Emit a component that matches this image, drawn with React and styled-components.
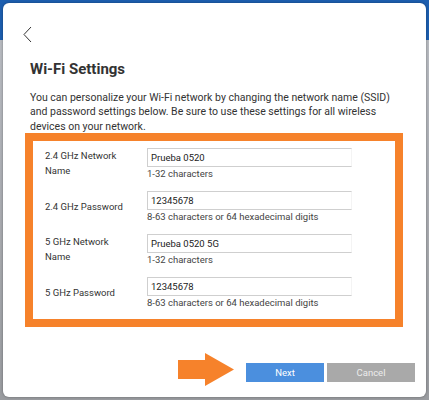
import React from "react";
import styled, { createGlobalStyle } from "styled-components";

const GlobalStyle = createGlobalStyle`
  html, body {
    margin: 0;
    padding: 0;
  }
  body {
    width: 429px;
    height: 400px;
    overflow: hidden;
    font-family: Roboto, "Liberation Sans", sans-serif;
    background: linear-gradient(180deg, #1d5fb0 0px, #1d5fb0 40px, #b9bcc2 40px, #9a9ca0 100%);
  }
`;

const Backdrop = styled.div`
  width: 429px;
  height: 400px;
  box-sizing: border-box;
  padding: 3px 3px 3px 3px;
  display: flex;
`;

const Modal = styled.div`
  flex: 1;
  background: #fff;
  border-radius: 6px;
  box-shadow: 0 0 3px rgba(0, 0, 0, 0.35);
  display: flex;
  flex-direction: column;
`;

const Header = styled.div`
  height: 41px;
  display: flex;
  align-items: flex-end;
  padding-left: 18px;
`;

const BackButton = styled.button`
  border: 0;
  background: none;
  padding: 0;
  width: 14px;
  height: 18px;
  display: flex;
  cursor: pointer;
`;

const Content = styled.div`
  padding: 0 23px 0 22px;
  display: flex;
  flex-direction: column;
  flex: 1;
`;

const Title = styled.h2`
  margin: 16px 0 0 5px;
  font-size: 15px;
  line-height: 18px;
  font-weight: 700;
  color: #333;
`;

const Intro = styled.p`
  margin: 13px 0 0 5px;
  font-size: 10.5px;
  line-height: 14.3px;
  color: #333;
`;

const Highlight = styled.div`
  margin-top: -1px;
  border: 8px solid #f6822b;
  padding: 7px 12px 10px 12px;
  display: flex;
  flex-direction: column;
  gap: 11px;
`;

const Row = styled.div`
  display: grid;
  grid-template-columns: 102px 1fr;
  align-items: center;
`;

const Label = styled.div`
  font-size: 9.5px;
  line-height: 14.5px;
  color: #333;
  padding-right: 20px;
`;

const Field = styled.div`
  display: flex;
  flex-direction: column;
`;

const Input = styled.input`
  box-sizing: border-box;
  width: 205px;
  height: 19px;
  border: 1px solid #cfcfcf;
  border-right-color: #f4f4f4;
  padding: 0 3px;
  font-family: inherit;
  font-size: 9.5px;
  color: #222;
  outline: none;
`;

const Hint = styled.div`
  font-size: 9.5px;
  line-height: 13px;
  color: #444;
`;

const Footer = styled.div`
  margin-top: auto;
  padding: 0 11px 11px 0;
  display: flex;
  justify-content: flex-end;
  align-items: center;
`;

const Pointer = styled.svg`
  width: 56px;
  height: 33px;
  margin-right: 12px;
  margin-top: -6px;
`;

const Button = styled.button`
  height: 19px;
  width: ${(p) => p.$w}px;
  border: 0;
  padding: 0;
  margin-left: ${(p) => (p.$gap ? 3 : 0)}px;
  font-family: inherit;
  font-size: 9.5px;
  background: ${(p) => (p.$primary ? "#4b8fde" : "#a9a9a9")};
  color: ${(p) => (p.$primary ? "#fff" : "#ececec")};
  cursor: pointer;
`;

const FIELDS = [
  { label: "2.4 GHz Network Name", value: "Prueba 0520", hint: "1-32 characters" },
  { label: "2.4 GHz Password", value: "12345678", hint: "8-63 characters or 64 hexadecimal digits" },
  { label: "5 GHz Network Name", value: "Prueba 0520 5G", hint: "1-32 characters" },
  { label: "5 GHz Password", value: "12345678", hint: "8-63 characters or 64 hexadecimal digits" },
];

export default function App() {
  return (
    <>
      <GlobalStyle />
      <Backdrop>
        <Modal>
          <Header>
            <BackButton aria-label="Back">
              <svg width="14" height="18" viewBox="0 0 14 18">
                <polyline points="10,1 3,8.5 10,16" fill="none" stroke="#333" strokeWidth="1" />
              </svg>
            </BackButton>
          </Header>
          <Content>
            <Title>Wi-Fi Settings</Title>
            <Intro>
              You can personalize your Wi-Fi network by changing the network name (SSID) and
              password settings below. Be sure to use these settings for all wireless devices on
              your network.
            </Intro>
            <Highlight>
              {FIELDS.map(({ label, value, hint }, key) => (
                <Row key={key}>
                  <Label>{label}</Label>
                  <Field>
                    <Input type="text" defaultValue={value} />
                    <Hint>{hint}</Hint>
                  </Field>
                </Row>
              ))}
            </Highlight>
          </Content>
          <Footer>
            <Pointer viewBox="0 0 56 33">
              <polygon points="0,7 27,7 27,0 56,16.5 27,33 27,26 0,26" fill="#f6822b" />
            </Pointer>
            <Button $primary $w={78}>Next</Button>
            <Button $gap $w={88}>Cancel</Button>
          </Footer>
        </Modal>
      </Backdrop>
    </>
  );
}
